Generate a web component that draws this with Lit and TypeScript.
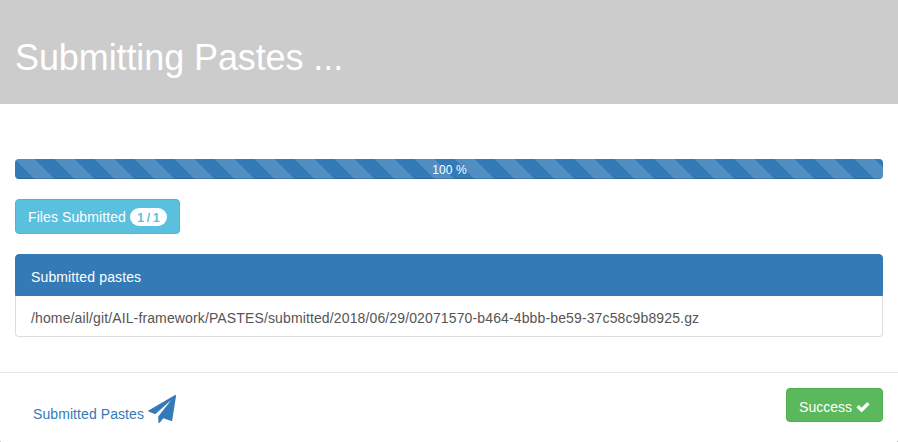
import { LitElement, html, css } from "lit";
import { customElement, property } from "lit/decorators.js";

@customElement("app-root")
export class AppRoot extends LitElement {
  @property({ type: Number }) progress = 100;
  @property({ type: Array }) files = [
    "/home/ail/git/AIL-framework/PASTES/submitted/2018/06/29/02071570-b464-4bbb-be59-37c58c9b8925.gz",
  ];

  static styles = css`
    :host {
      display: block;
      height: 442px;
      box-sizing: border-box;
      overflow: hidden;
      background:
        linear-gradient(#ccc, #ccc) left bottom / 1px 1px no-repeat,
        linear-gradient(#ccc, #ccc) right bottom / 1px 1px no-repeat,
        #fff;
      color: #555;
      font: 14px/20px "Liberation Sans", Arial, sans-serif;
    }
    * { box-sizing: border-box; }
    .header {
      height: 104px;
      padding: 38px 15px 0;
      background: #ccc;
    }
    h1 {
      margin: 0;
      color: #fff;
      font-size: 36px;
      font-weight: 400;
      line-height: 40px;
      letter-spacing: -0.1px;
    }
    .body { height: 268px; padding: 55px 15px 0; }
    .progress {
      height: 20px;
      margin-bottom: 20px;
      border-radius: 4px;
      overflow: hidden;
      background: #f5f5f5;
    }
    .bar {
      height: 100%;
      color: #fff;
      font-size: 12px;
      line-height: 22px;
      letter-spacing: 0.1px;
      text-indent: 1px;
      text-align: center;
      background: #337ab7 linear-gradient(45deg,
        rgba(255, 255, 255, 0.15) 25%, transparent 25%, transparent 50%,
        rgba(255, 255, 255, 0.15) 50%, rgba(255, 255, 255, 0.15) 75%,
        transparent 75%, transparent) 0 0 / 40px 40px;
      box-shadow: inset 0 -1px 0 rgba(0, 0, 0, 0.15);
    }
    .btn {
      display: flex;
      align-items: center;
      padding: 0 12px;
      border: 1px solid;
      border-radius: 4px;
      font: inherit;
      color: #fff;
      white-space: nowrap;
    }
    .info {
      width: 165px;
      height: 35px;
      justify-content: space-between;
      background: #5bc0de;
      border-color: #46b8da;
      letter-spacing: 0.1px;
    }
    .success { height: 34px; background: #5cb85c; border-color: #4cae4c; }
    .success span { padding-top: 3px; }
    .badge {
      width: 37px;
      height: 18px;
      border-radius: 10px;
      background: #fff;
      color: #5bc0de;
      font-size: 12px;
      font-weight: 700;
      line-height: 20px;
      letter-spacing: 0;
      word-spacing: -0.5px;
      text-align: center;
    }
    .list {
      margin: 20px 0 0;
      padding: 0;
      list-style: none;
      letter-spacing: 0.13px;
    }
    .list li { padding: 0 15px; border: 1px solid #ddd; }
    .list .title {
      height: 42px;
      padding-top: 12px;
      border-color: #337ab7;
      border-radius: 4px 4px 0 0;
      background: #337ab7;
      color: #fff;
    }
    .list .file {
      height: 41px;
      padding-top: 12px;
      border-top: 0;
      border-radius: 0 0 4px 4px;
    }
    .footer {
      display: flex;
      justify-content: space-between;
      align-items: flex-start;
      height: 70px;
      padding: 15px 15px 0 33px;
      border-top: 1px solid #e5e5e5;
    }
    a {
      display: flex;
      gap: 4px;
      padding-top: 7px;
      color: #337ab7;
      text-decoration: none;
      letter-spacing: 0.08px;
    }
    a span { padding-top: 9px; }
    svg { display: block; fill: currentColor; }
    .check {
      margin: 3px 0 0 4px;
      stroke: currentColor;
      stroke-width: 70;
      overflow: visible;
    }
  `;

  render() {
    return html`
      <header class="header"><h1>Submitting Pastes ...</h1></header>
      <main class="body">
        <div class="progress">
          <div class="bar" style="width:${this.progress}%">${this.progress} %</div>
        </div>
        <button class="btn info">
          <span>Files Submitted</span><span class="badge">${this.files.length} / ${this.files.length}</span>
        </button>
        <ul class="list">
          <li class="title">Submitted pastes</li>
          ${this.files.map((f) => html`<li class="file">${f}</li>`)}
        </ul>
      </main>
      <footer class="footer">
        <a><span>Submitted Pastes</span>
          <svg width="28" height="28" viewBox="0 0 28 28"><path d="M27.3.1q.8.3.7 1.1l-3.8 24.3q-.2.7-.9.6l-7.9-2.8-3.5 4.3q-.4.5-.9.4-.6-.2-.6-.8l-.2-5.6L23.2 5 7.2 19.2.5 16.6q-1-.5 0-1.1L26.6.2q.4-.2.7-.1z"/></svg>
        </a>
        <button class="btn success">
          <span>Success</span>
          <svg class="check" width="14" height="14" viewBox="0 0 1792 1792"><path d="M1671 566q0 40-28 68l-724 724-136 136q-28 28-68 28t-68-28l-136-136-362-362q-28-28-28-68t28-68l136-136q28-28 68-28t68 28l294 295 656-657q28-28 68-28t68 28l136 136q28 28 28 68z"/></svg>
        </button>
      </footer>
    `;
  }
}
